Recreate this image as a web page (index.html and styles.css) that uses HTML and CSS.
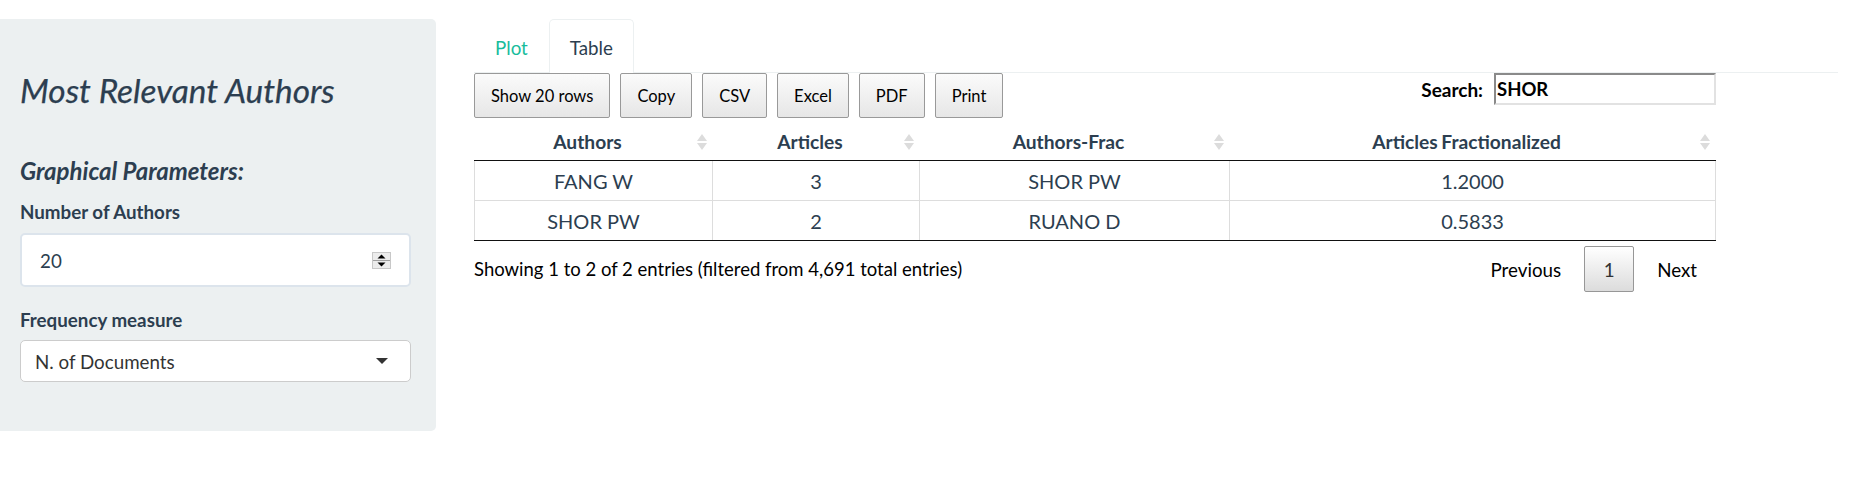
FILE: index.html
```html
<!DOCTYPE html>
<html>
<head>
<meta charset="utf-8">
<link rel="stylesheet" href="styles.css">
</head>
<body>
<div class="page">
  <aside class="sidebar">
    <h2 class="title">Most Relevant Authors</h2>
    <h4 class="subhead">Graphical Parameters:</h4>
    <label class="lbl">Number of Authors</label>
    <div class="num-input">
      <span>20</span>
      <svg class="spin" width="19" height="17" viewBox="0 0 19 17">
        <rect x="0.5" y="0.5" width="18" height="16" fill="#ececec" stroke="#c8c8c8"/>
        <line x1="1" y1="8.5" x2="18" y2="8.5" stroke="#a0a0a0"/>
        <polygon points="5.5,6.5 13.5,6.5 9.5,2.5" fill="#000"/>
        <polygon points="5.5,10.5 13.5,10.5 9.5,14.5" fill="#000"/>
      </svg>
    </div>
    <label class="lbl">Frequency measure</label>
    <div class="select">
      <span>N. of Documents</span>
      <span class="caret"></span>
    </div>
  </aside>
  <main class="main">
    <ul class="tabs">
      <li class="tab"><a>Plot</a></li>
      <li class="tab active"><a>Table</a></li>
    </ul>
    <div class="dt">
      <div class="dt-top">
        <div class="buttons">
          <button class="btn">Show 20 rows</button>
          <button class="btn">Copy</button>
          <button class="btn">CSV</button>
          <button class="btn">Excel</button>
          <button class="btn">PDF</button>
          <button class="btn">Print</button>
        </div>
        <div class="search">
          <span class="search-lbl">Search:</span>
          <div class="search-box">SHOR</div>
        </div>
      </div>
      <table class="grid">
        <colgroup>
          <col class="c1"><col class="c2"><col class="c3"><col class="c4">
        </colgroup>
        <thead>
          <tr>
            <th>Authors<span class="sort"></span></th>
            <th>Articles<span class="sort"></span></th>
            <th>Authors-Frac<span class="sort"></span></th>
            <th>Articles Fractionalized<span class="sort"></span></th>
          </tr>
        </thead>
        <tbody>
          <tr><td>FANG W</td><td>3</td><td>SHOR PW</td><td>1.2000</td></tr>
          <tr><td>SHOR PW</td><td>2</td><td>RUANO D</td><td>0.5833</td></tr>
        </tbody>
      </table>
      <div class="dt-bottom">
        <div class="info">Showing 1 to 2 of 2 entries (filtered from 4,691 total entries)</div>
        <div class="paginate">
          <span class="pg">Previous</span>
          <span class="pg current">1</span>
          <span class="pg">Next</span>
        </div>
      </div>
    </div>
  </main>
</div>
</body>
</html>
```

FILE: styles.css
```css
* { box-sizing: border-box; }
html, body { margin: 0; padding: 0; background: #fff; }
body {
  font-family: Lato, "Open Sans", sans-serif;
  font-size: 18.75px;
  color: #2c3e50;
}
.page {
  display: flex;
  align-items: flex-start;
  padding-top: 19px;
}
.sidebar {
  width: 436px;
  flex: none;
  background: #ecf0f1;
  border-radius: 0 5px 5px 0;
  padding: 53px 25px 49px 20px;
  display: flex;
  flex-direction: column;
}
.title {
  margin: 0;
  font-size: 33.4px;
  line-height: 37px;
  font-style: italic;
  font-weight: 400;
  color: #2c3e50;
  -webkit-text-stroke: 0.25px #2c3e50;
}
.subhead {
  margin: 48px 0 0;
  font-size: 24px;
  line-height: 28px;
  font-style: italic;
  font-weight: 700;
  color: #2c3e50;
}
.lbl {
  display: block;
  margin-top: 16px;
  font-weight: 700;
  line-height: 22px;
  color: #2c3e50;
}
.num-input {
  margin-top: 10px;
  height: 54px;
  background: #fff;
  border: 2px solid #dce4ec;
  border-radius: 5px;
  display: flex;
  align-items: center;
  justify-content: space-between;
  padding: 0 18px 0 18px;
  color: #2c3e50;
}
.spin { display: block; }
.num-input + .lbl { margin-top: 22px; }
.select {
  margin-top: 9px;
  height: 42px;
  background: #fff;
  border: 1px solid #cccccc;
  border-radius: 5px;
  display: flex;
  align-items: center;
  justify-content: space-between;
  padding: 0 22px 0 14px;
  color: #333;
}
.caret {
  width: 0;
  height: 0;
  border-left: 6px solid transparent;
  border-right: 6px solid transparent;
  border-top: 6px solid #333;
}
.main {
  margin-left: 38px;
  flex: 1;
  margin-right: 14px;
}
.tabs {
  list-style: none;
  margin: 0;
  padding: 0;
  display: flex;
  border-bottom: 1px solid #ecf0f1;
  height: 54px;
}
.tab a {
  display: flex;
  align-items: center;
  height: 54px;
  padding: 2px 20px 0;
  color: #18bc9c;
  border: 1px solid transparent;
  border-bottom: none;
  border-radius: 5px 5px 0 0;
}
.tab.active a {
  color: #2c3e50;
  background: #fff;
  border-color: #ecf0f1;
}
.dt {
  width: 1242px;
  color: #000;
}
.dt-top {
  display: flex;
  justify-content: space-between;
  align-items: flex-start;
}
.buttons {
  display: flex;
  gap: 10px;
}
.btn {
  height: 45px;
  padding: 0 16px;
  font-family: Lato, sans-serif;
  font-size: 16.5px;
  color: #000;
  border: 1px solid #999;
  border-radius: 2px;
  background: linear-gradient(to bottom, #fbfbfb 0%, #e6e6e6 100%);
}
.search {
  display: flex;
  align-items: center;
  gap: 11px;
  height: 32px;
}
.search-lbl {
  font-weight: 700;
  font-size: 19px;
}
.search-box {
  width: 222px;
  height: 32px;
  border: 2px solid;
  border-color: #8a8a8a #e2e2e2 #e2e2e2 #8a8a8a;
  font-weight: 700;
  font-size: 18.5px;
  padding: 0 1px;
  display: flex;
  align-items: center;
}
.grid {
  margin-top: 5px;
  width: 100%;
  border-collapse: collapse;
  table-layout: fixed;
  color: #2c3e50;
}
.c1 { width: 238px; }
.c2 { width: 207px; }
.c3 { width: 310px; }
.c4 { width: auto; }
.grid th {
  position: relative;
  font-weight: 700;
  font-size: 19.2px;
  line-height: 21px;
  padding: 8px 30px 8px 18px;
  text-align: center;
  border-bottom: 1px solid #111;
  word-spacing: -1px;
}
.sort {
  position: absolute;
  right: 5px;
  top: 11px;
  width: 11px;
  height: 16px;
}
.sort::before, .sort::after {
  content: "";
  position: absolute;
  left: 0;
  width: 0;
  height: 0;
  border-left: 5.5px solid transparent;
  border-right: 5.5px solid transparent;
}
.sort::before { top: 0; border-bottom: 7px solid #dcdcdc; }
.sort::after { bottom: 0; border-top: 7px solid #dcdcdc; }
.grid td {
  height: 40px;
  padding: 0 10px;
  font-size: 20px;
  text-align: center;
  border-left: 1px solid #ddd;
  border-top: 1px solid #ddd;
}
.grid td:last-child { border-right: 1px solid #ddd; }
.grid tbody tr:first-child td { border-top: none; }
.grid tbody tr:last-child td { border-bottom: 1px solid #111; }
.dt-bottom {
  display: flex;
  justify-content: space-between;
  align-items: center;
  margin-top: 5px;
}
.info {
  font-size: 18.5px;
  color: #000;
}
.paginate {
  display: flex;
  align-items: center;
  margin-right: 8px;
}
.pg {
  font-size: 18.75px;
  color: #000;
  padding: 0 11px;
}
.pg.current {
  margin: 0 12px;
  width: 50px;
  height: 46px;
  display: flex;
  align-items: center;
  justify-content: center;
  border: 1px solid #979797;
  border-radius: 2px;
  background: linear-gradient(to bottom, #fff 0%, #dcdcdc 100%);
  color: #333;
}
```
